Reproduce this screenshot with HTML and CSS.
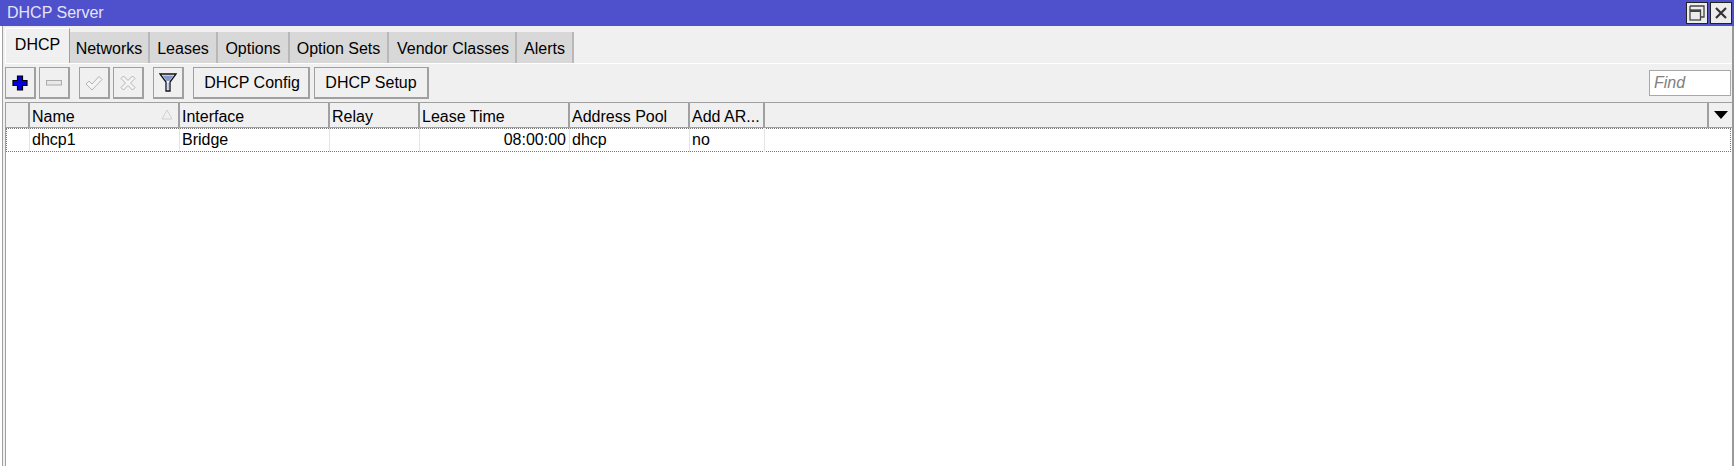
FILE: index.html
```html
<!DOCTYPE html>
<html lang="en">
<head>
<meta charset="UTF-8">
<title>DHCP Server</title>
<link rel="stylesheet" href="styles.css">
</head>
<body>

<div class="titlebar">
    <span class="title">DHCP Server</span>
    <div class="win-btns">
        <div class="win-btn">
            <svg width="16" height="16" viewBox="0 0 16 16" fill="none" stroke="#444" stroke-width="1.300">
                <path d="M1 1H15V12H11.500"/>
                <path d="M1 1V5"/>
                <rect x="1" y="5" width="10.500" height="10"/>
                <path d="M1 6H11.500" stroke-width="2"/>
            </svg>
        </div>
        <div class="win-btn">
            <svg width="18" height="18" viewBox="0 0 18 18" fill="none" stroke="#333" stroke-width="2.200">
                <path d="M4 4L14 14M14 4L4 14"/>
            </svg>
        </div>
    </div>
</div>

<div class="main">

    <!-- TABS -->
    <div class="tabs">
        <div class="tab active">DHCP</div>
        <div class="tab w-networks">Networks</div>
        <div class="tab w-leases">Leases</div>
        <div class="tab w-options">Options</div>
        <div class="tab w-sets">Option Sets</div>
        <div class="tab w-vendor">Vendor Classes</div>
        <div class="tab w-alerts">Alerts</div>
    </div>

    <!-- TOOLBAR -->
    <div class="toolbar">
        <div class="btn icon">
            <svg width="16" height="16" viewBox="0 0 16 16">
                <path d="M5.500 1H10.500V5.500H15V10.500H10.500V15H5.500V10.500H1V5.500H5.500Z" fill="#0000e0" stroke="#000" stroke-width="1.200"/>
            </svg>
        </div>
        <div class="btn icon">
            <svg width="16" height="6" viewBox="0 0 16 6">
                <rect x="0.500" y="0.500" width="15" height="4.500" fill="#e8e8e8" stroke="#aaa"/>
            </svg>
        </div>
        <div class="btn icon gap-left">
            <svg width="18" height="16" viewBox="0 0 18 16">
                <path d="M1 9L4 6L7 9L14 1.500L17 4.500L7 15Z" fill="#f4f4f4" stroke="#b4b4b4"/>
            </svg>
        </div>
        <div class="btn icon">
            <svg width="16" height="16" viewBox="0 0 16 16">
                <path d="M1 3.500L3.500 1L8 5.500L12.500 1L15 3.500L10.500 8L15 12.500L12.500 15L8 10.500L3.500 15L1 12.500L5.500 8Z" fill="#f4f4f4" stroke="#b4b4b4"/>
            </svg>
        </div>
        <div class="btn icon gap-left">
            <svg width="18" height="19" viewBox="0 0 18 19">
                <path d="M1 1H17L11 9V18H7V9Z" fill="#fff" stroke="#111" stroke-width="1.300"/>
                <path d="M3.500 2.500H14.500L10.500 8H7.500Z" fill="#8496cf"/>
                <path d="M8.500 9.500H9.800V16.800H8.500Z" fill="#a9b6e0"/>
            </svg>
        </div>
        <div class="btn text config gap-left">DHCP Config</div>
        <div class="btn text setup">DHCP Setup</div>
        <div class="find">Find</div>
    </div>

    <!-- TABLE -->
    <div class="table">
        <div class="row head">
            <div class="cell c-mark"></div>
            <div class="cell c-name">Name
                <svg class="sort" width="12" height="11" viewBox="0 0 12 11" fill="none" stroke="#d0d0d0">
                    <path d="M6 1L11 10H1Z"/>
                </svg>
            </div>
            <div class="cell c-iface">Interface</div>
            <div class="cell c-relay">Relay</div>
            <div class="cell c-lease">Lease Time</div>
            <div class="cell c-pool">Address Pool</div>
            <div class="cell c-arp">Add AR...</div>
            <div class="cell c-rest"></div>
            <div class="cell c-menu">
                <svg width="14" height="8" viewBox="0 0 14 8"><path d="M0 0H14L7 8Z" fill="#000"/></svg>
            </div>
        </div>
        <div class="row data">
            <div class="cell c-mark"></div>
            <div class="cell c-name">dhcp1</div>
            <div class="cell c-iface">Bridge</div>
            <div class="cell c-relay"></div>
            <div class="cell c-lease right">08:00:00</div>
            <div class="cell c-pool">dhcp</div>
            <div class="cell c-arp">no</div>
            <div class="cell c-fill"></div>
        </div>
    </div>

</div>

</body>
</html>
```

FILE: styles.css
```css
*{
    margin:0;
    padding:0;
    box-sizing:border-box;
}

html,body{
    height:100%;
    overflow:hidden;
}

body{
    display:flex;
    flex-direction:column;
    background:#fff;
    color:#000;
    font-family:"Liberation Sans",Arial,sans-serif;
    font-size:16px;
}

/* TITLE */

.titlebar{
    height:26px;
    flex:none;
    display:flex;
    align-items:center;
    justify-content:space-between;
    background:#4f50cc;
    padding:0 2px 0 7px;
}

.title{
    color:#e4e4f4;
    font-size:16px;
}

.win-btns{
    display:flex;
    gap:2px;
}

.win-btn{
    width:22px;
    height:22px;
    display:flex;
    align-items:center;
    justify-content:center;
    background:#ececec;
    border:1px solid #222;
}

/* MAIN */

.main{
    flex:1;
    display:flex;
    flex-direction:column;
    background:#f0f0f0;
    margin-left:2px;
    padding:2px 0 0 2px;
    border-left:1px solid #a0a0a0;
    border-right:2px solid #999;
    min-width:0;
}

/* TABS */

.tabs{
    height:36px;
    flex:none;
    display:flex;
    align-items:flex-end;
    border-bottom:1px solid #fff;
}

.tab{
    height:31px;
    display:flex;
    align-items:center;
    justify-content:center;
    background:#d8d8d8;
    border-right:2px solid #b8b8b8;
    padding-top:2px;
}

.tab.active{
    width:65px;
    height:35px;
    background:#f0f0f0;
    border-top:1px solid #fff;
    border-left:1px solid #fff;
    border-right:1px solid #a0a0a0;
    padding:0 0 3px;
}

.w-networks{width:80px;}
.w-leases{width:68px;}
.w-options{width:72px;}
.w-sets{width:99px;}
.w-vendor{width:128px;padding-left:2px;}
.w-alerts{width:57px;}

/* TOOLBAR */

.toolbar{
    height:38px;
    flex:none;
    display:flex;
    align-items:flex-start;
    padding-top:3px;
    gap:3px;
}

.btn{
    height:32px;
    display:flex;
    align-items:center;
    justify-content:center;
    background:#f0f0f0;
    border:1px solid #a0a0a0;
    border-bottom-width:2px;
    border-right-width:2px;
}

.btn.icon{
    width:31px;
}

.gap-left{
    margin-left:6px;
}

.btn.config{
    width:117px;
    padding-left:2px;
}

.btn.setup{
    width:115px;
    margin-left:1px;
}

.find{
    width:82px;
    height:26px;
    margin:3px 1px 0 auto;
    padding-left:4px;
    line-height:24px;
    background:#fff;
    border:1px solid #a8a8a8;
    color:#808080;
    font-style:italic;
}

/* TABLE */

.table{
    flex:1;
    background:#fff;
    border-left:1px solid #a0a0a0;
    border-top:1px solid #a0a0a0;
}

.row{
    display:flex;
}

.row.head{
    height:25px;
    background:#f0f0f0;
    border-bottom:1px solid #a0a0a0;
}

.row.data{
    height:24px;
    outline:1px dotted #777;
    outline-offset:-1px;
    margin-right:1px;
}

.cell{
    flex:none;
    position:relative;
    padding-left:2px;
    line-height:24px;
    white-space:nowrap;
    border-right:1px solid #e4e4e4;
}

.head .cell{
    border-right:2px solid #a0a0a0;
    padding-top:2px;
}

.right{
    text-align:right;
    padding:0 3px 0 0;
}

.c-mark{width:24px;}
.c-name{width:150px;}
.c-iface{width:150px;}
.c-relay{width:90px;}
.c-lease{width:150px;}
.c-pool{width:120px;}
.c-arp{width:75px;}
.c-rest{width:944px;}
.c-menu{
    flex:1;
    display:flex;
    align-items:center;
    justify-content:center;
}
.head .c-menu{border-right:none;padding:0;}
.c-fill{flex:1;border-right:none;}

.sort{
    position:absolute;
    right:5px;
    top:6px;
}
```
